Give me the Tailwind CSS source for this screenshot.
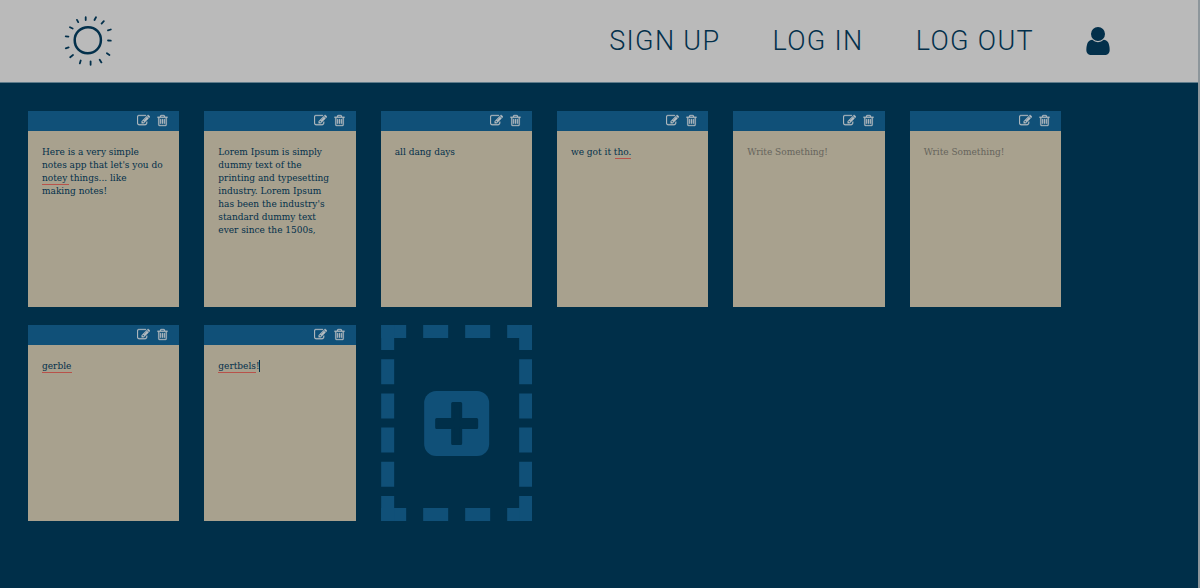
<!DOCTYPE html>
<html lang="en">
<head>
<meta charset="utf-8">
<meta name="viewport" content="width=device-width, initial-scale=1">
<title>Notes</title>
<script src="https://cdn.jsdelivr.net/npm/@tailwindcss/browser@4"></script>
</head>
<body class="min-h-screen bg-[#002f49] border-r-2 border-[#8d969b] font-['Roboto',sans-serif] text-[#03304b]">
<svg class="hidden" aria-hidden="true">
  <symbol id="edit" viewBox="0 0 1792 1792"><path d="M888 1184l116-116-152-152-116 116v56h96v96h56zm440-720q-16-16-33 1l-350 350q-17 17-1 33t33-1l350-350q17-17 1-33zm80 594v190q0 119-84.5 203.5t-203.5 84.5h-832q-119 0-203.5-84.5t-84.5-203.5v-832q0-119 84.5-203.5t203.5-84.5h832q63 0 117 25 15 7 18 23 3 17-9 29l-49 49q-14 14-32 8-23-6-45-6h-832q-66 0-113 47t-47 113v832q0 66 47 113t113 47h832q66 0 113-47t47-113v-126q0-13 9-22l64-64q15-15 35-7t20 29zm-96-738l288 288-672 672h-288v-288zm444 132l-92 92-288-288 92-92q28-28 68-28t68 28l152 152q28 28 28 68t-28 68z"/></symbol>
  <symbol id="trash" viewBox="0 0 1792 1792"><path d="M704 736v576q0 14-9 23t-23 9h-64q-14 0-23-9t-9-23v-576q0-14 9-23t23-9h64q14 0 23 9t9 23zm256 0v576q0 14-9 23t-23 9h-64q-14 0-23-9t-9-23v-576q0-14 9-23t23-9h64q14 0 23 9t9 23zm256 0v576q0 14-9 23t-23 9h-64q-14 0-23-9t-9-23v-576q0-14 9-23t23-9h64q14 0 23 9t9 23zm128 724v-948h-896v948q0 22 7 40.5t14.5 27 10.5 8.5h832q3 0 10.5-8.5t14.5-27 7-40.5zm-672-1076h448l-48-117q-7-9-17-11h-317q-10 2-17 11zm928 32v64q0 14-9 23t-23 9h-96v948q0 83-47 143.5t-113 60.5h-832q-66 0-113-58.5t-47-141.5v-952h-96q-14 0-23-9t-9-23v-64q0-14 9-23t23-9h309l70-167q15-37 54-63t79-26h320q40 0 79 26t54 63l70 167h309q14 0 23 9t9 23z"/></symbol>
</svg>

<header class="flex items-center justify-between bg-[#bababa] border-b border-[#5f7c8b] py-4 pl-16 pr-[88px]">
  <a href="#" aria-label="Home">
    <svg class="w-12 h-[50px]" viewBox="0 0 48 50" fill="none" stroke="currentColor" stroke-linecap="round">
      <path stroke-width="2.5" d="M23.8 11.2C31.6 11 37 17 36.9 24.2C36.8 31.8 30.800 37.300 23.600 37.200C16 37.100 10.600 31.300 10.700 24C10.800 16.800 16.600 11.300 23.800 11.200Z"/>
      <path stroke-width="1.8" d="M14.200 6.100l-1.200-2.200M21.700 1.200v2.800M32 1.200l-1.500 2.800M39.800 5.200l-2.200 2.400M46.800 13.500l-2.800.9M46.800 24.700l-2.800-.2M45.400 39l-2.500-1.700M37.400 46.400l-1.700-2.700M26.600 48.800v-3.500M15.800 47.400l.9-2.900M6.200 41.200l2.800-2.200M1.800 32.300l2.800-.9M1.700 20.300l2.700.3M6 11.200l2.600 1.300"/>
    </svg>
  </a>
  <nav class="flex items-center gap-[52px] text-[27px] leading-8 font-light tracking-wider whitespace-nowrap">
    <a href="#">SIGN UP</a>
    <a href="#">LOG IN</a>
    <a href="#">LOG OUT</a>
    <a href="#" aria-label="Account">
      <svg class="block w-6 h-7" viewBox="256 128 1280 1536" fill="currentColor"><path d="M1536 1399q0 109-62.500 187t-150.500 78h-854q-88 0-150.500-78t-62.500-187q0-85 8.500-160.500t31.500-152 58.500-131 94-89 134.500-34.500q131 128 313 128t313-128q76 0 134.500 34.500t94 89 58.500 131 31.500 152 8.500 160.500zm-256-887q0 159-112.500 271.500t-271.500 112.500-271.500-112.500-112.500-271.500 112.500-271.500 271.500-112.500 271.500 112.500 112.500 271.500z"/></svg>
    </a>
  </nav>
</header>

<main id="notes" class="grid grid-cols-6 gap-x-[25px] gap-y-[18px] pt-7 pl-7 pr-[137px] pb-10">
  <button type="button" aria-label="Add note" class="order-last text-[#105078]">
    <svg class="block h-[196px] w-full" viewBox="0 0 151 196" fill="none" stroke="currentColor" stroke-width="13">
      <path stroke-dasharray="25 17" d="M0 6.5h151M0 189.5h151"/>
      <path stroke-dasharray="25 9.2" d="M6.500 0v196M144.500 0v196"/>
      <rect x="43" y="66" width="65" height="65" rx="12" fill="currentColor" stroke="none"/>
      <path stroke="#002f49" stroke-width="3" stroke-linejoin="round" fill="#002f49" d="M71.500 78.500h8v16h16v8h-16v16h-8v-16h-16v-8h16z"/>
    </svg>
  </button>
</main>

<template id="note">
  <article class="flex flex-col">
    <div class="flex h-5 items-start justify-end gap-1.5 bg-[#105078] pt-[3px] pr-2.5 text-[#b5bcc1]">
      <button type="button" aria-label="Edit note"><svg class="block size-[13px]" fill="currentColor" stroke="currentColor" stroke-width="40"><use href="#edit"/></svg></button>
      <button type="button" aria-label="Delete note"><svg class="block size-[13px]" fill="currentColor" stroke="currentColor" stroke-width="40"><use href="#trash"/></svg></button>
    </div>
    <div class="relative flex">
      <textarea aria-label="Note" placeholder="Write Something!" spellcheck="false" class="block h-44 w-full resize-none overflow-hidden bg-[#a8a18e] pt-3.5 pl-3.5 pr-1 font-['Roboto_Slab','DejaVu_Serif_Condensed','DejaVu_Serif',serif] font-medium text-[10px] leading-[13px] text-[#03304b] placeholder:text-[#66645c] outline-none"></textarea>
    </div>
  </article>
</template>

<script>
  // mark: class list of the spelling underline drawn over the note
  const notes = [
    { text: "Here is a very simple\nnotes app that let's you do\nnotey things... like\nmaking notes!", mark: "absolute h-px bg-[#b8524a] left-3.5 top-[53px] w-[27px]" },
    { text: "Lorem Ipsum is simply\ndummy text of the\nprinting and typesetting\nindustry. Lorem Ipsum\nhas been the industry's\nstandard dummy text\never since the 1500s," },
    { text: "all dang days" },
    { text: "we got it tho.", mark: "absolute h-px bg-[#b8524a] left-[58px] top-[27px] w-4" },
    { text: "" },
    { text: "" },
    { text: "gerble", mark: "absolute h-px bg-[#b8524a] left-3.5 top-[27px] w-[30px]" },
    { text: "gertbels!", mark: "absolute h-px bg-[#b8524a] left-3.5 top-[27px] w-[38px]", caret: "absolute w-px h-3 bg-[#03304b] left-[55px] top-[15px]" }
  ];
  const main = document.getElementById("notes");
  const tpl = document.getElementById("note");
  for (const n of notes) {
    const el = tpl.content.cloneNode(true);
    const area = el.querySelector("textarea");
    area.value = n.text;
    for (const cls of [n.mark, n.caret]) {
      if (!cls) continue;
      const s = document.createElement("span");
      s.className = cls;
      area.parentNode.appendChild(s);
    }
    main.appendChild(el);
  }
</script>
</body>
</html>
